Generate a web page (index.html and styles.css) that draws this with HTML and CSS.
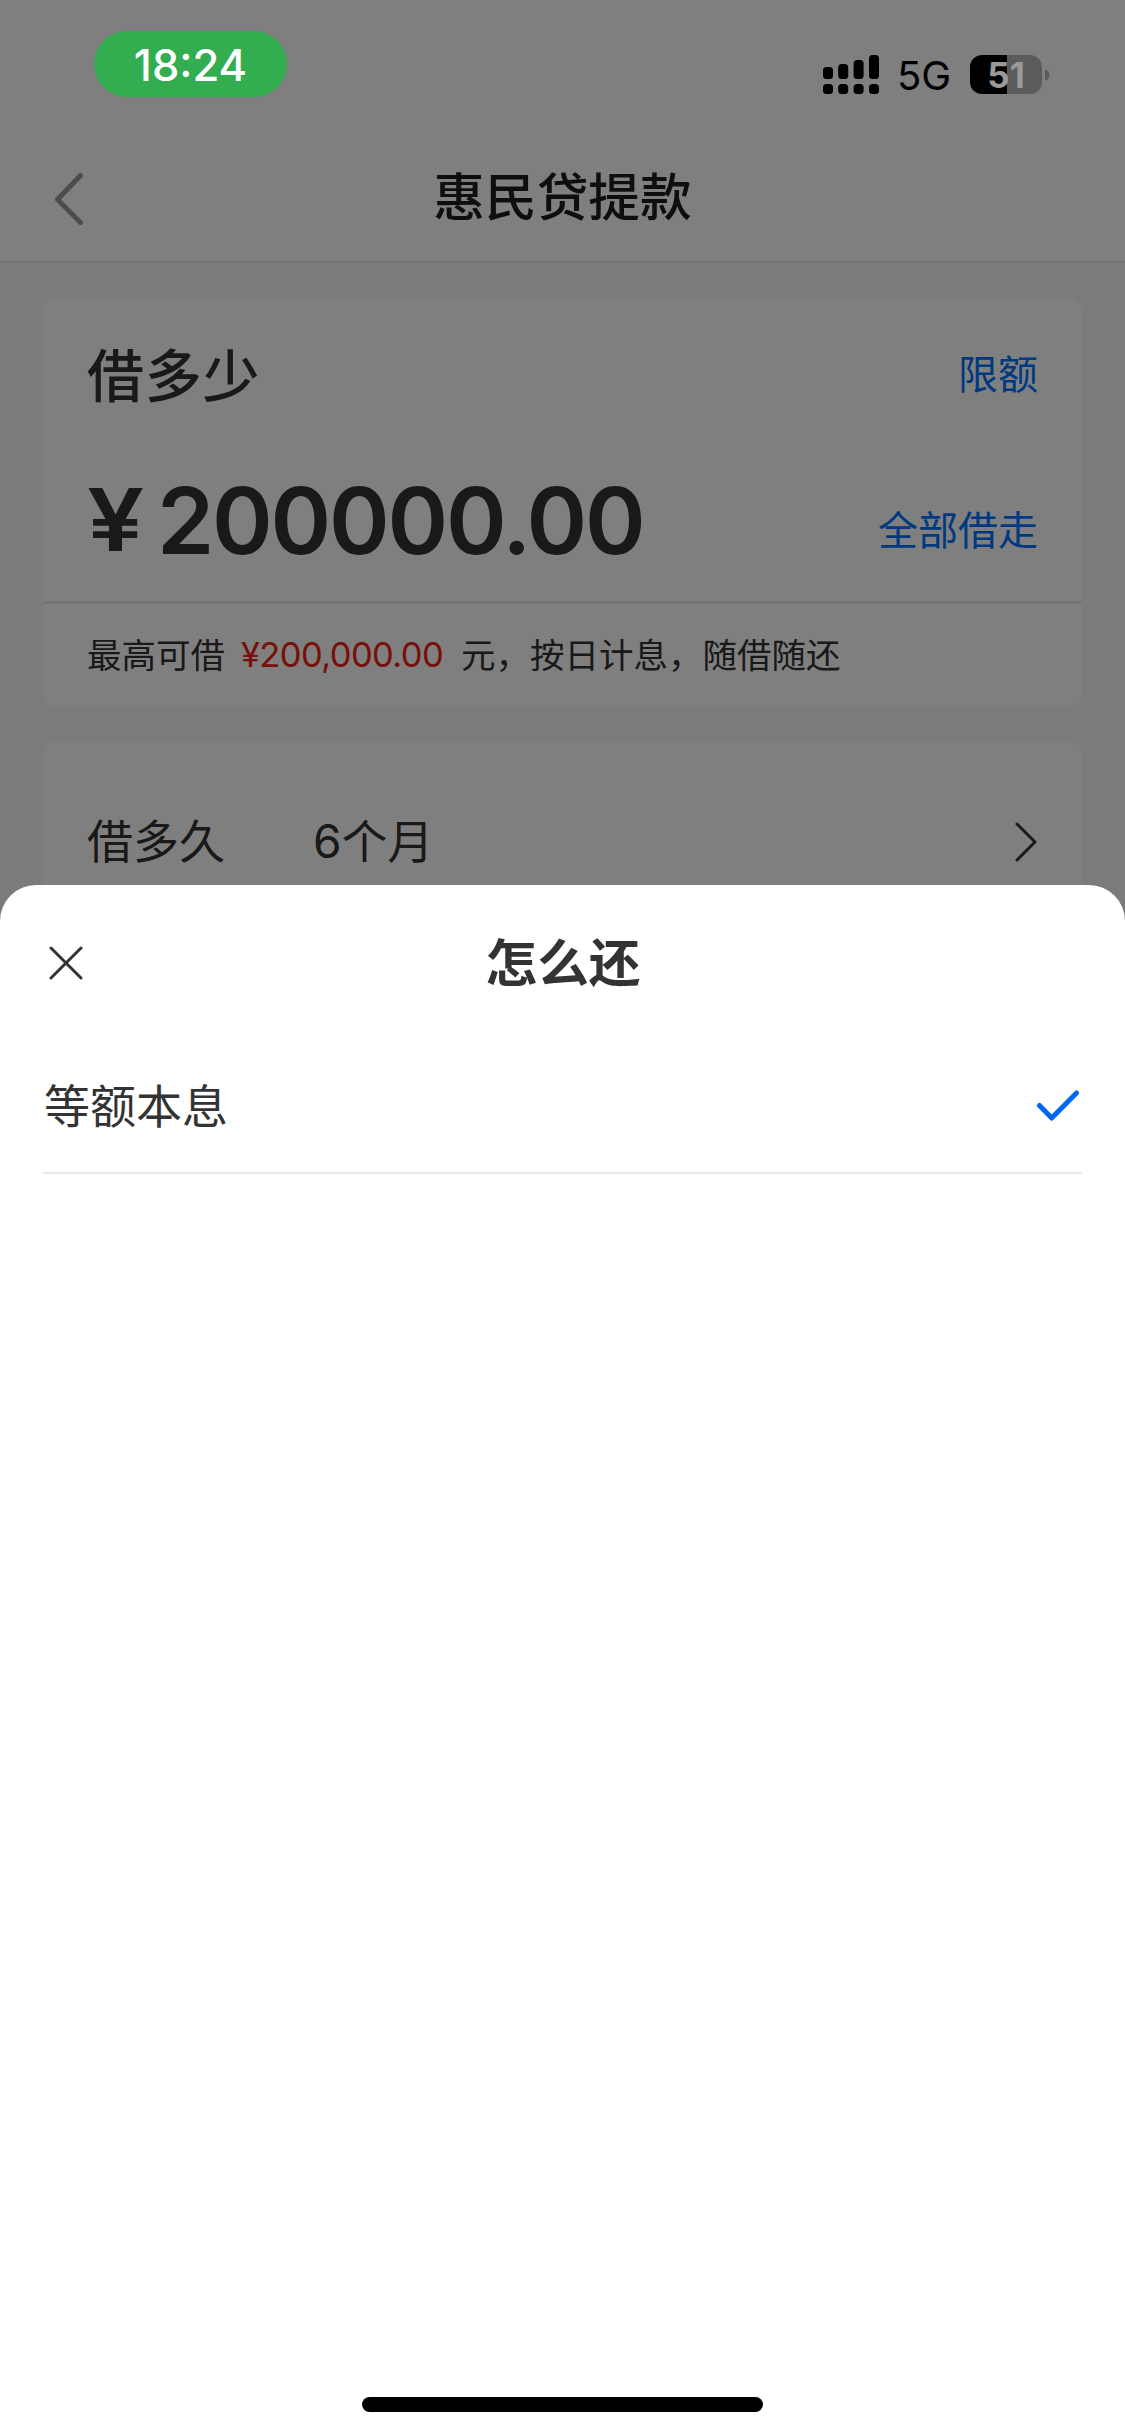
FILE: index.html
```html
<!DOCTYPE html>
<html lang="zh-CN">
<head>
<meta charset="utf-8">
<title>惠民贷提款</title>
<link rel="stylesheet" href="styles.css">
</head>
<body>
<div class="screen">
  <div class="status">
    <span class="clock">18:24</span>
    <div class="indicators">
      <svg class="signal" width="56" height="39" viewBox="0 0 56 39">
        <rect x="0" y="12" width="10" height="12" rx="3.5"/><rect x="15.2" y="9" width="10" height="15" rx="3.5"/><rect x="30.6" y="5" width="10" height="19" rx="3.5"/><rect x="46" y="0" width="10" height="24" rx="3.5"/>
        <rect x="0" y="29" width="10" height="10" rx="3.5"/><rect x="15.2" y="29" width="10" height="10" rx="3.5"/><rect x="30.6" y="29" width="10" height="10" rx="3.5"/><rect x="46" y="29" width="10" height="10" rx="3.5"/>
      </svg>
      <span class="network">5G</span>
      <div class="battery"><span class="level">51</span></div>
      <svg class="nub" width="5" height="12" viewBox="0 0 5 12"><path d="M0 0.5C6 2 6 10 0 11.5Z"/></svg>
    </div>
  </div>

  <div class="page">
    <header class="navbar">
      <svg class="back" width="30" height="54" viewBox="0 0 30 54"><path d="M26.5 3.5 3.5 27.5 26.5 50.5"/></svg>
      <h1>惠民贷提款</h1>
    </header>
    <section class="card">
      <div class="card-head"><h2>借多少</h2><a class="link">限额</a></div>
      <div class="amount-row">
        <div class="amount"><span class="yen">¥</span><span class="value">200000.00</span></div>
        <a class="link">全部借走</a>
      </div>
      <p class="hint"><span>最高可借</span><span class="limit">¥200,000.00</span><span>元，按日计息，随借随还</span></p>
    </section>
    <section class="card term">
      <span class="label">借多久</span><span class="months">6个月</span>
      <svg class="more" width="24" height="42" viewBox="0 0 24 42"><path d="M3 3 21 21 3 39"/></svg>
    </section>
  </div>

  <div class="mask"></div>

  <div class="sheet">
    <div class="sheet-head">
      <svg class="close" width="34" height="34" viewBox="0 0 34 34"><path d="M2 2 32 32M32 2 2 32"/></svg>
      <h2>怎么还</h2>
    </div>
    <div class="option">
      <span class="option-name">等额本息</span>
      <svg class="check" width="46" height="34" viewBox="0 0 46 34"><path d="M3.500 16.500 15.700 29 40.500 4"/></svg>
    </div>
    <div class="home"></div>
  </div>
</div>
</body>
</html>
```
FILE: styles.css
```css
* { box-sizing: border-box; }
body {
  margin: 0;
  font-family: Inter, "Noto Sans CJK SC", sans-serif;
  color: #333;
}
h1, h2, p { margin: 0; }
svg { flex: none; }

.screen {
  position: relative;
  height: 2435px;
  overflow: hidden;
  background: #f6f6f6;
}

/* Status bar, drawn above the dimmed page */
.status {
  position: absolute;
  inset: 0 0 auto 0;
  z-index: 2;
  display: flex;
  justify-content: space-between;
  align-items: flex-start;
  padding: 31px 75px 0 94px;
  color: #000;
}
.clock {
  width: 193px;
  height: 66px;
  border-radius: 33px;
  background: #32ad50;
  color: #fff;
  font-size: 43.5px;
  font-weight: 500;
  line-height: 68px;
  text-align: center;
}
.indicators { display: flex; align-items: center; margin-top: 24px; height: 39px; }
.network { width: 51px; margin-left: 18px; margin-right: 22px; font-size: 40px; line-height: 39px; white-space: nowrap; padding-top: 2px; }
.battery {
  width: 72px;
  height: 39px;
  border-radius: 12px;
  background: linear-gradient(90deg, #000 37px, #5b5b5b 37px);
  text-align: center;
}
.level { color: #999; font-size: 35px; font-weight: 700; line-height: 40px; }
.nub { margin-left: 3px; fill: #5b5b5b; }

.navbar {
  display: flex;
  align-items: center;
  height: 263px;
  padding: 136px 54px 0;
  border-bottom: 2px solid #ececec;
  background: #fff;
}
.navbar h1 { flex: 1; margin-right: 30px; padding-bottom: 3px; text-align: center; font-size: 51.7px; font-weight: 500; line-height: 70px; color: #1c1c1c; }
.back { fill: none; stroke: #999; stroke-width: 5; stroke-linecap: round; stroke-linejoin: round; }

.card { margin: 35px 43px 0; background: #fff; border-radius: 14px; }
.card-head { display: flex; justify-content: space-between; align-items: center; height: 153px; padding: 0 44px; }
.card-head h2 { padding-top: 4px; font-size: 57px; font-weight: 500; line-height: 80px; letter-spacing: 0.7px; }
.link { color: #0073ff; font-size: 40px; line-height: 56px; }
.amount-row {
  display: flex;
  justify-content: space-between;
  align-items: center;
  height: 153px;
  padding: 0 44px;
  border-bottom: 3px solid #e9e9e9;
}
.amount-row .link { padding-top: 10px; }
.amount { display: flex; align-items: center; padding-bottom: 10px; font-weight: 600; }
.yen { width: 70px; margin-top: -3px; font-size: 86px; line-height: 100px; transform: scaleX(1.18); transform-origin: 0 50%; }
.value { font-size: 92px; line-height: 100px; letter-spacing: -2.2px; }
.hint { display: flex; align-items: center; height: 103px; padding: 0 44px 5px; font-size: 34.5px; white-space: nowrap; }
.limit { width: 201px; margin: 2px 19px 0 16px; color: #ef2010; letter-spacing: -0.6px; }

.term { display: flex; align-items: center; height: 201px; margin-top: 34px; padding: 0 44px; font-size: 46px; }
.label, .months { padding-bottom: 8px; }
.months { margin-left: 88px; }
.more { margin-left: auto; fill: none; stroke: #333; stroke-width: 3; stroke-linecap: round; stroke-linejoin: round; }

.mask { position: absolute; inset: 0; background: rgba(0, 0, 0, 0.5); }

.sheet {
  position: absolute;
  inset: 884.5px 0 0 0;
  display: flex;
  flex-direction: column;
  border-radius: 36px 36px 0 0;
  background: #fff;
}
.sheet-head { display: flex; align-items: center; height: 156px; padding: 0 49px; }
.sheet-head h2 { flex: 1; margin-right: 33px; text-align: center; font-size: 51.7px; font-weight: 700; line-height: 70px; }
.close { fill: none; stroke: #333; stroke-width: 3; stroke-linecap: round; }
.option {
  display: flex;
  justify-content: space-between;
  align-items: center;
  height: 133px;
  margin: 0 43px;
  border-bottom: 2px solid #e9e9e9;
  font-size: 46px;
}
.option-name { padding: 0 0 7px 1px; }
.check { fill: none; stroke: #0069ef; stroke-width: 5; stroke-linecap: round; stroke-linejoin: round; }
.home { width: 401px; height: 15px; margin: auto auto 23px; border-radius: 8px; background: #000; }
```
